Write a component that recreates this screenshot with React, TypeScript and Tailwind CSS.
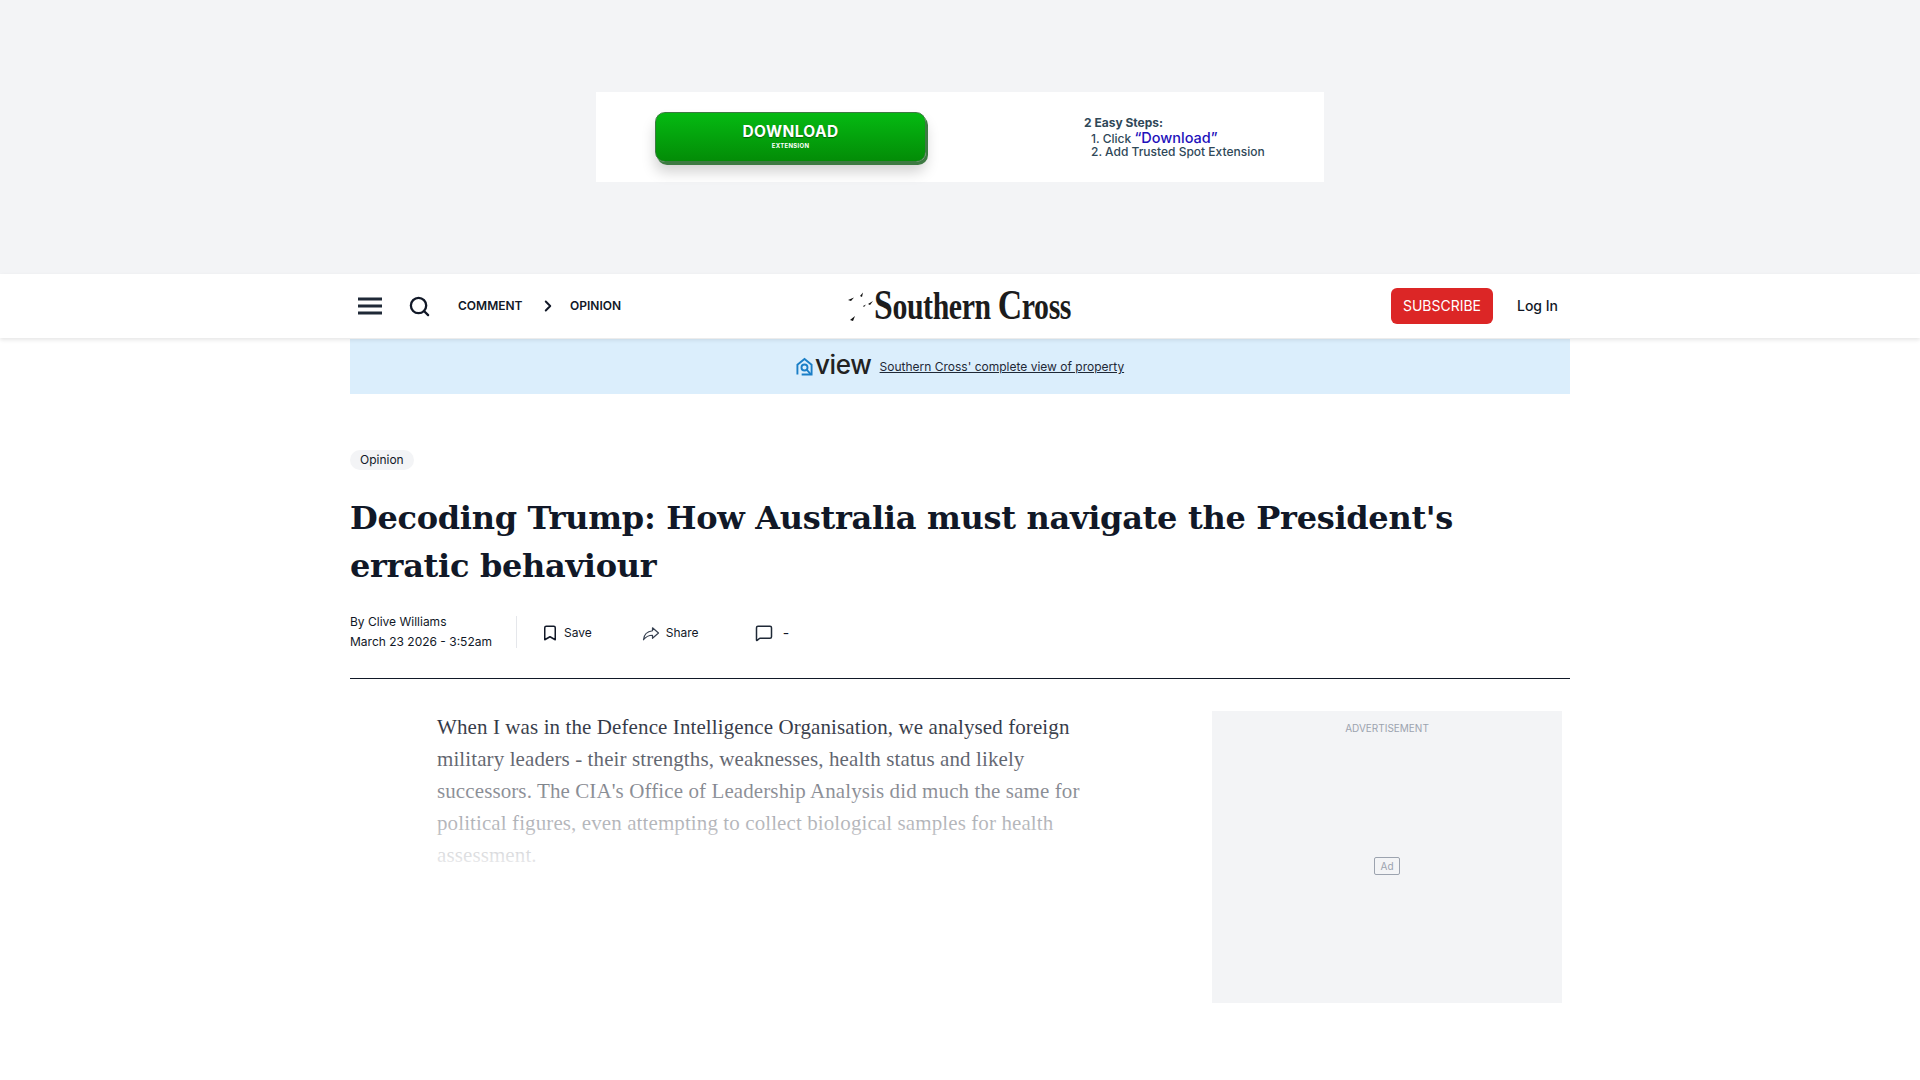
import { Bookmark, MessageSquare, Search, ChevronRight } from 'lucide-react'

const inter = 'font-[Inter,sans-serif]'

function AdBanner() {
  return (
    <div className="flex h-[274px] items-center justify-center bg-[#f3f4f6]">
      <div className={`flex h-[90px] w-[728px] items-center bg-white ${inter}`}>
        <div className="ml-[59px] flex h-[50px] w-[271px] flex-col items-center justify-center rounded-[10px] border border-[#3d7a42] bg-gradient-to-b from-[#05ba12] to-[#038c07] text-white shadow-[2px_3px_0_#3d7a42,0_10px_14px_rgba(0,0,0,0.18)]">
          <span className="text-[15.5px] leading-[18px] font-bold tracking-[0.4px] [text-shadow:0_1px_1px_rgba(0,0,0,0.4)]">DOWNLOAD</span>
          <span className="text-[6px] leading-[10px] font-bold tracking-[0.3px]">EXTENSION</span>
        </div>
        <div className="ml-[158px] text-[12px] leading-[13px] font-medium text-[#2f4858]">
          <div className="mb-[2px] font-bold">2 Easy Steps:</div>
          <div className="pl-[7px]">1. Click <span className="text-[14.5px] text-[#2211bb]">“Download”</span></div>
          <div className="pl-[7px]">2. Add Trusted Spot Extension</div>
        </div>
      </div>
    </div>
  )
}

function Logo() {
  return (
    <div className="flex items-center">
      <svg width="27" height="32" viewBox="0 0 27 32" className="shrink-0" fill="#111">
        <path d="M1 10l6-2.5-3 3.5zM13 6l3-3.5-1 4.5zM16 16l3-1.5-2 2.5zM21 14l5-3-3 4zM3 30l5-4-2 5z" />
      </svg>
      <span className="mt-[-4px] origin-left scale-x-[0.785] font-['Liberation_Serif',serif] text-[38px] leading-none font-bold tracking-[-0.5px] whitespace-nowrap text-[#1c1c1c]">
        <span className="text-[43px]">S</span>outhern <span className="text-[43px]">C</span>ross
      </span>
    </div>
  )
}

function Header() {
  return (
    <header className="relative z-10 h-16 bg-white shadow-[0_2px_4px_rgba(0,0,0,0.1)]">
      <div className="mx-auto grid h-full w-[1220px] grid-cols-3 items-center text-[#111827]">
        <div className={`flex items-center ${inter}`}>
          <svg width="24" height="18" viewBox="0 0 24 18" className="ml-[8px]" fill="#1f2937">
            <rect y="0.5" width="24" height="3" />
            <rect y="7.5" width="24" height="3" />
            <rect y="14.5" width="24" height="3" />
          </svg>
          <Search className="ml-[26px] h-[23px] w-[23px]" strokeWidth={2.4} />
          <span className="ml-[27px] text-xs font-semibold">COMMENT</span>
          <ChevronRight className="ml-[16px] h-[18px] w-[18px]" strokeWidth={2.6} />
          <span className="ml-[13.5px] text-xs font-semibold">OPINION</span>
        </div>
        <div className="flex justify-center">
          <div className="w-[225px]"><Logo /></div>
        </div>
        <div className={`flex items-center justify-end ${inter}`}>
          <button className="flex h-9 w-[102px] items-center justify-center rounded-md bg-[#dc2626] text-sm text-white">SUBSCRIBE</button>
          <span className="mr-[12px] ml-[24px] text-sm font-medium">Log In</span>
        </div>
      </div>
    </header>
  )
}

function ViewBar() {
  return (
    <div className={`mx-auto mt-px flex h-[55px] w-[1220px] items-center justify-center bg-[#dbeefc] ${inter}`}>
      <svg width="17" height="20" viewBox="0 0 18 20" fill="none" stroke="#1b7fc7" strokeWidth="2">
        <path d="M1.5 18V7.5L9 1.5l7.5 6V18H6" />
        <circle cx="9" cy="10.5" r="3.2" />
        <path d="M11.5 13l4 4.5" />
      </svg>
      <span className="mt-[-3px] ml-[2px] text-[26px] leading-none font-medium tracking-[-0.3px] text-[#222]">view</span>
      <span className="mt-px ml-2 text-xs text-[#1f2937] underline">Southern Cross' complete view of property</span>
    </div>
  )
}

function ShareIcon() {
  return (
    <svg className="ml-[50px]" width="18" height="18" viewBox="0 0 24 24" fill="none" stroke="#374151" strokeWidth="1.6" strokeLinejoin="round">
      <path d="M14 5l8 7-8 7v-4c-6 0-9 2-12 6 .5-6 4-11 12-12V5z" />
    </svg>
  )
}

function ActionBar() {
  return (
    <div className={`mt-[26px] flex items-center ${inter} text-xs text-[#111827]`}>
      <div className="flex h-8 flex-col justify-center leading-5">
        <span>By Clive Williams</span>
        <span>March 23 2026 - 3:52am</span>
      </div>
      <div className="ml-6 h-8 border-l border-[#e5e7eb]" />
      <div className="mt-[2px] flex items-center">
        <Bookmark className="ml-[24px] h-[18px] w-[18px]" strokeWidth={2} />
        <span className="ml-[5px]">Save</span>
        <ShareIcon />
        <span className="ml-[6px]">Share</span>
        <MessageSquare className="ml-[56px] h-[18px] w-[18px] text-[#1f2937]" strokeWidth={2} />
        <span className="ml-[10px] text-sm">-</span>
      </div>
    </div>
  )
}

export default function App() {
  return (
    <div className="h-[1080px] overflow-hidden bg-white">
      <AdBanner />
      <Header />
      <ViewBar />
      <main className="mx-auto w-[1220px]">
        <span className={`mt-[56px] inline-block h-5 rounded-full bg-[#f3f4f6] px-[10px] text-xs leading-5 text-[#111827] ${inter}`}>Opinion</span>
        <h1 className="mt-[24px] w-[1140px] font-['DejaVu_Serif',serif] text-[32px] leading-[48px] font-bold tracking-[-0.3px] text-[#111827]">
          Decoding Trump: How Australia must navigate the President's erratic behaviour
        </h1>
        <ActionBar />
        <div className="mt-[30px] border-t border-[#111827]" />
        <div className="mt-[32px] flex">
          <div className="relative ml-[87px] h-[292px] w-[650px]">
            <p className="w-[648px] font-['Liberation_Serif',serif] text-[21px] leading-[32px] tracking-[0.1px] text-[#1f2937]">
              When I was in the Defence Intelligence Organisation, we analysed foreign military leaders - their strengths, weaknesses, health status and likely successors. The CIA's Office of Leadership Analysis did much the same for political figures, even attempting to collect biological samples for health assessment.
            </p>
            <div className="absolute inset-x-0 top-0 h-[170px] bg-gradient-to-b from-white/0 to-white" />
          </div>
          <aside className={`ml-[125px] flex h-[292px] w-[350px] flex-col items-center bg-[#f3f4f6] ${inter}`}>
            <span className="mt-[10px] text-[10px] leading-[14px] text-[#9ca3af]">ADVERTISEMENT</span>
            <span className="mt-[122px] rounded-[2px] border border-[#9ca3af] px-[5px] text-[10px] leading-4 text-[#9ca3af]">Ad</span>
          </aside>
        </div>
      </main>
    </div>
  )
}
